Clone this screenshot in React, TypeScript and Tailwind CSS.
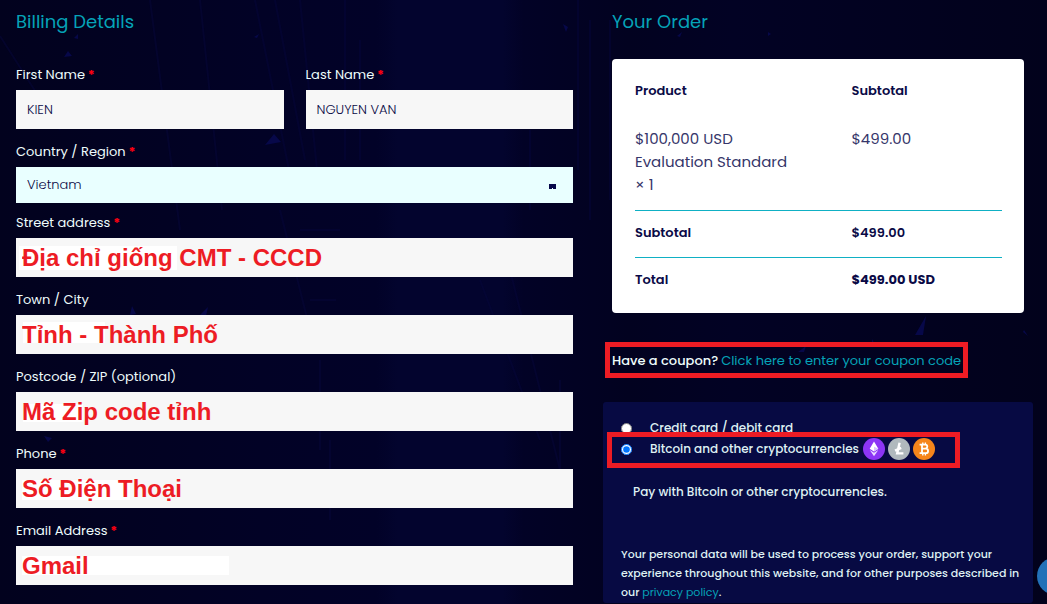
import type { ReactNode } from "react";

interface FieldProps {
  id: string;
  label: string;
  value: string;
  required?: boolean;
  type?: string;
  noted?: boolean;
  patch?: string;
}

const inkInput =
  "relative block h-[39px] w-full bg-transparent px-[11px] text-[13px] font-light text-[#0a0a46] outline-none";
const notedInput =
  "relative block h-[39px] w-full bg-transparent px-[6px] font-[Liberation_Sans,Arial,sans-serif] text-[24px] font-bold text-[#ed1c24] outline-none";

function Label({
  htmlFor,
  required,
  children,
}: {
  htmlFor: string;
  required?: boolean;
  children: ReactNode;
}) {
  return (
    <label
      htmlFor={htmlFor}
      className="mb-1 block text-[13px] leading-[22px] text-[#eefcfc]"
    >
      {children}
      {required && <span className="font-bold text-[#ff0010]"> *</span>}
    </label>
  );
}

function Field({
  id,
  label,
  value,
  required,
  type = "text",
  noted,
  patch,
}: FieldProps) {
  return (
    <div>
      <Label htmlFor={id} required={required}>
        {label}
      </Label>
      <div className="relative bg-[#f7f7f7]">
        {patch && <span className={`absolute bg-white ${patch}`} />}
        <input
          id={id}
          type={type}
          defaultValue={value}
          className={noted ? notedInput : inkInput}
        />
      </div>
    </div>
  );
}

function Backdrop() {
  return (
    <svg
      className="absolute inset-0 h-full w-full"
      viewBox="0 0 1047 604"
      preserveAspectRatio="none"
      aria-hidden="true"
    >
      <defs>
        <linearGradient id="sky" x1="0" x2="1" y1="0" y2="0">
          <stop offset="0" stopColor="#02021e" />
          <stop offset="0.25" stopColor="#020226" />
          <stop offset="0.36" stopColor="#020228" />
          <stop offset="0.38" stopColor="#03042e" />
          <stop offset="0.48" stopColor="#03042e" />
          <stop offset="0.5" stopColor="#020226" />
          <stop offset="0.6" stopColor="#020220" />
          <stop offset="0.7" stopColor="#020224" />
          <stop offset="1" stopColor="#02021c" />
        </linearGradient>
      </defs>
      <rect width="1047" height="604" fill="url(#sky)" />
      <g stroke="#05053a" strokeWidth="2" opacity="0.5" fill="none">
        <path d="M0 36L60 130M150 0l30 230M200 0l22 210M255 0l40 200M275 0l30 160M300 0l20 200M345 0v160M360 40v120M578 0v170M590 20v200M530 130v80M610 20v180" />
        <path d="M280 210l30 120M300 230h40M300 250h36M310 300h26M320 360v90M330 440v80M480 280l60 160M510 270l50 200M560 380v120M620 480v90" />
      </g>
      <g fill="#070849">
        <path d="M64 57l4-6 4 5zM74 38l4-4v5zM265 145l9-11 7 8zM200 315l8-8-2 9zM130 315l2-9 4 8zM44 436l8 2-4 4zM254 37l5-3-2 4z" />
        <path d="M563 24l5 3-2 5zM915 335l11-19-3 19zM677 36l5-4-2 5zM768 32l3 2-3 2zM1024 330l4 6-5-4zM798 352l8-6-2 6zM872 339l4 8-4-2z" />
      </g>
    </svg>
  );
}

function EthereumIcon() {
  return (
    <svg viewBox="0 0 22 22" className="size-[22px]" aria-label="Ethereum">
      <circle cx="11" cy="11" r="11" fill="#8c35f5" />
      <path d="M11 3.5l4.3 7.3L11 13.4l-4.3-2.6z" fill="#fff" />
      <path d="M6.7 12.1l4.3 2.6 4.3-2.6-4.3 6.2z" fill="#e9dcff" />
      <path d="M11 8.8l4.3 2L11 13.4z" fill="#d9c2ff" />
    </svg>
  );
}

function LitecoinIcon() {
  return (
    <svg viewBox="0 0 22 22" className="size-[22px]" aria-label="Litecoin">
      <circle cx="11" cy="11" r="11" fill="#b0b9bd" />
      <path
        d="M11.6 4.8L9.2 15.4h6.2M7 12.6l6.2-2.8"
        fill="none"
        stroke="#fff"
        strokeWidth="2.4"
      />
    </svg>
  );
}

function BitcoinIcon() {
  return (
    <svg viewBox="0 0 22 22" className="size-[22px]" aria-label="Bitcoin">
      <circle cx="11" cy="11" r="11" fill="#f6851b" />
      <g fill="none" stroke="#fff" strokeWidth="1.8">
        <path d="M6.6 6.6h5.6c2.8 0 2.8 4 0 4H9M9 10.6h3.8c3 0 3 4.6 0 4.6H6.6M9 6.6v8.6" />
        <path d="M9.8 4.4v2M12.4 4.4v2M9.8 15.4v2.2M12.4 15.4v2.2" strokeWidth="1.4" />
      </g>
    </svg>
  );
}

function BillingForm() {
  return (
    <form>
      <h2 className="text-[18px] leading-6 text-[#05a3b8]">Billing Details</h2>
      <div className="mt-[30px] grid grid-cols-2 gap-[22px]">
        <Field id="first" label="First Name" value="KIEN" required />
        <Field id="last" label="Last Name" value="NGUYEN VAN" required />
      </div>
      <div className="mt-3">
        <Label htmlFor="country" required>
          Country / Region
        </Label>
        <div className="relative">
          <select
            id="country"
            defaultValue="VN"
            className="block h-9 w-full appearance-none bg-[#e9ffff] px-[11px] text-[13px] font-light text-[#0a0a46] outline-none"
          >
            <option value="VN">Vietnam</option>
          </select>
          <svg
            viewBox="0 0 7 5"
            className="pointer-events-none absolute top-[17px] right-[17px] h-[5px] w-[7px]"
            aria-hidden="true"
          >
            <path d="M0 0h7v5H4V4H3v1H0z" fill="#07084a" />
          </svg>
        </div>
      </div>
      <div className="mt-[9px] flex flex-col gap-3">
        <Field
          id="street"
          label="Street address"
          value="Địa chỉ giống CMT - CCCD"
          required
          noted
          patch="top-2 left-[3px] h-6 w-[158px]"
        />
        <Field
          id="city"
          label="Town / City"
          value="Tỉnh - Thành Phố"
          noted
          patch="top-[7px] left-[7px] h-[21px] w-[82px]"
        />
        <Field
          id="zip"
          label="Postcode / ZIP (optional)"
          value="Mã Zip code tỉnh"
          noted
          patch="top-3 left-[7px] h-[18px] w-[60px]"
        />
        <Field
          id="phone"
          label="Phone"
          type="tel"
          value="Số Điện Thoại"
          required
          noted
          patch="top-[11px] left-[6px] h-5 w-[108px]"
        />
        <Field
          id="email"
          label="Email Address"
          value="Gmail"
          required
          noted
          patch="top-[10px] left-[6px] h-[19px] w-[207px]"
        />
      </div>
    </form>
  );
}

function OrderTable() {
  return (
    <div className="mx-[9px] mt-[25px] rounded-[4px] bg-white pt-5 pr-[22px] pb-[22px] pl-[23px] text-[#0a0a46]">
      <table className="w-full table-fixed text-left text-[13px] leading-[23px] font-semibold">
        <thead>
          <tr>
            <th className="w-[59%] font-semibold">Product</th>
            <th className="font-semibold">Subtotal</th>
          </tr>
        </thead>
        <tbody>
          <tr className="border-b border-[#0fb0c4] align-top text-[15px] font-normal text-[#36366a]">
            <td className="pt-[25px] pr-12 pb-[14px]">
              $100,000 USD Evaluation Standard <span className="block">× 1</span>
            </td>
            <td className="pt-[25px]">$499.00</td>
          </tr>
        </tbody>
        <tfoot>
          <tr className="border-b border-[#0fb0c4]">
            <th className="pt-[10px] pb-[13px] font-semibold">Subtotal</th>
            <td className="pt-[10px] pb-[13px]">$499.00</td>
          </tr>
          <tr>
            <th className="pt-[10px] font-semibold">Total</th>
            <td className="pt-[10px] font-bold">$499.00 USD</td>
          </tr>
        </tfoot>
      </table>
    </div>
  );
}

function Payment() {
  return (
    <section className="mt-6 rounded-[3px] bg-[#070a43] pt-4 pr-2 pl-[18px] text-[12px] font-medium text-[#dff1f3]">
      <div className="relative">
        <div className="flex h-5 items-center gap-[18px]">
          <input
            id="card"
            type="radio"
            name="payment"
            className="size-[11px] accent-[#0075ff]"
          />
          <label htmlFor="card">Credit card / debit card</label>
        </div>
        <div className="flex h-[22px] items-center gap-[18px]">
          <input
            id="crypto"
            type="radio"
            name="payment"
            defaultChecked
            className="size-[11px] accent-[#0075ff]"
          />
          <label htmlFor="crypto">Bitcoin and other cryptocurrencies</label>
          <span className="-ml-[14px] flex gap-[3px]">
            <EthereumIcon />
            <LitecoinIcon />
            <BitcoinIcon />
          </span>
        </div>
        <div className="pointer-events-none absolute top-[14px] -left-[14px] h-9 w-[353px] border-5 border-[#ed1c24]" />
      </div>
      <p className="mt-[22px] pl-3 leading-[19px]">
        Pay with Bitcoin or other cryptocurrencies.
      </p>
      <p className="mt-[44px] pb-px text-[11px] leading-[19px]">
        Your personal data will be used to process your order, support your
        experience throughout this website, and for other purposes described in
        our{" "}
        <a href="#privacy" className="font-normal text-[#05a3b8]">
          privacy policy
        </a>
        .
      </p>
    </section>
  );
}

export default function App() {
  return (
    <main className="relative min-h-screen overflow-hidden bg-[#02021f] font-[Poppins,Inter,sans-serif]">
      <Backdrop />
      <div className="relative grid grid-cols-[557fr_430fr] gap-[30px] pt-[10px] pr-[14px] pl-4">
        <BillingForm />
        <div>
          <h2 className="ml-[9px] text-[18px] leading-6 text-[#05a3b8]">
            Your Order
          </h2>
          <OrderTable />
          <p className="mt-[29px] ml-[2px] flex h-9 w-[363px] items-center gap-[3px] border-5 border-[#ed1c24] pt-[2px] pl-[2px] text-[13px] whitespace-nowrap text-[#eefcfc]">
            <span className="font-medium">Have a coupon?</span>
            <a href="#coupon" className="text-[#05a3b8]">
              Click here to enter your coupon code
            </a>
          </p>
          <Payment />
        </div>
      </div>
      <button
        type="button"
        aria-label="Open chat"
        className="fixed -right-7 bottom-[9px] size-[38px] rounded-full bg-[#2271b8]"
      />
    </main>
  );
}
